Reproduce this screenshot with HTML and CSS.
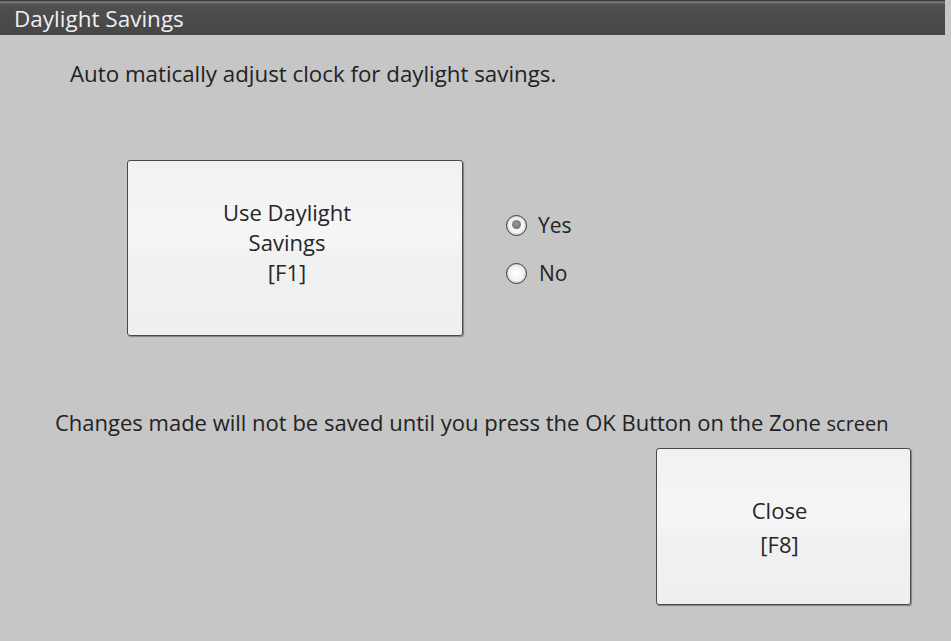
FILE: index.html
```html
<!DOCTYPE html>
<html>
<head>
<meta charset="utf-8">
<link rel="stylesheet" href="styles.css">
</head>
<body>
<div class="window">
  <div class="titlebar"><span class="title">Daylight Savings</span></div>
  <p class="intro">Auto matically adjust clock for daylight savings.</p>
  <div class="option-row">
    <div class="btn btn-use">
      <span>Use Daylight</span>
      <span>Savings</span>
      <span>[F1]</span>
    </div>
    <div class="radios">
      <div class="radio-item"><span class="radio checked"></span><span class="radio-label">Yes</span></div>
      <div class="radio-item"><span class="radio"></span><span class="radio-label no">No</span></div>
    </div>
  </div>
  <p class="note">Changes made will not be saved until you press the OK Button on the Zone <span class="small">screen</span></p>
  <div class="close-row">
    <div class="btn btn-close">
      <span>Close</span>
      <span>[F8]</span>
    </div>
  </div>
</div>
</body>
</html>
```
FILE: styles.css
```css
html, body {
  margin: 0;
  padding: 0;
}
body {
  background: #c6c6c6;
  width: 951px;
  height: 641px;
  overflow: hidden;
  font-family: "Open Sans", "Noto Sans", sans-serif;
  color: #222;
}
.window {
  width: 951px;
  height: 641px;
}
.titlebar {
  width: 945px;
  height: 35px;
  box-sizing: border-box;
  background: linear-gradient(to bottom, #3e3e3e 0px, #3e3e3e 1px, #8a8a8a 2px, #6a6a6a 3px, #505050 4px, #4a4a4a 20px, #474747 35px);
  display: flex;
  align-items: center;
  padding-left: 14px;
  padding-top: 2px;
}
.title {
  color: #efefef;
  font-size: 22.5px;
  line-height: 30px;
}
.intro {
  margin: 0;
  padding: 24px 0 0 70px;
  font-size: 22.3px;
  line-height: 30px;
}
.option-row {
  display: flex;
  align-items: flex-start;
  margin: 71px 0 0 127px;
}
.btn {
  box-sizing: border-box;
  background: linear-gradient(to bottom, #f1f1f1 0%, #f6f6f6 45%, #f1f1f1 55%, #efefef 100%);
  border: 1px solid #4a4a4a;
  border-radius: 3px;
  box-shadow: 1px 1px 1px rgba(0,0,0,0.35);
  display: flex;
  flex-direction: column;
  align-items: center;
  justify-content: center;
  font-size: 22px;
  color: #262626;
  line-height: 30px;
}
.btn-use {
  width: 336px;
  height: 176px;
  padding-bottom: 12px;
  padding-right: 16px;
}
.radios {
  display: flex;
  flex-direction: column;
  gap: 24px;
  margin: 53px 0 0 43px;
}
.radio-item {
  display: flex;
  align-items: center;
  height: 24px;
}
.radio {
  box-sizing: border-box;
  width: 21px;
  height: 21px;
  border-radius: 50%;
  border: 1.5px solid #3a3a3a;
  background: radial-gradient(circle at 50% 50%, #ffffff 0%, #f0f0f0 60%, #dcdcdc 100%);
  position: relative;
  box-shadow: inset 0 0 2px rgba(0,0,0,0.3);
}
.radio.checked::after {
  content: "";
  position: absolute;
  left: 4.5px;
  top: 4.5px;
  width: 9px;
  height: 9px;
  border-radius: 50%;
  background: radial-gradient(circle at 45% 40%, #9a9a9a, #666);
}
.radio-label {
  margin-left: 11px;
  font-size: 21px;
}
.radio-label.no {
  margin-left: 12px;
}
.note {
  margin: 71px 0 0 55px;
  font-size: 22px;
  line-height: 30px;
}
.note .small {
  font-size: 20px;
  line-height: 20px;
}
.close-row {
  display: flex;
  justify-content: flex-end;
  padding-right: 40px;
  margin-top: 11px;
}
.btn-close {
  width: 255px;
  height: 157px;
  line-height: 34px;
  padding-right: 8px;
}
```
